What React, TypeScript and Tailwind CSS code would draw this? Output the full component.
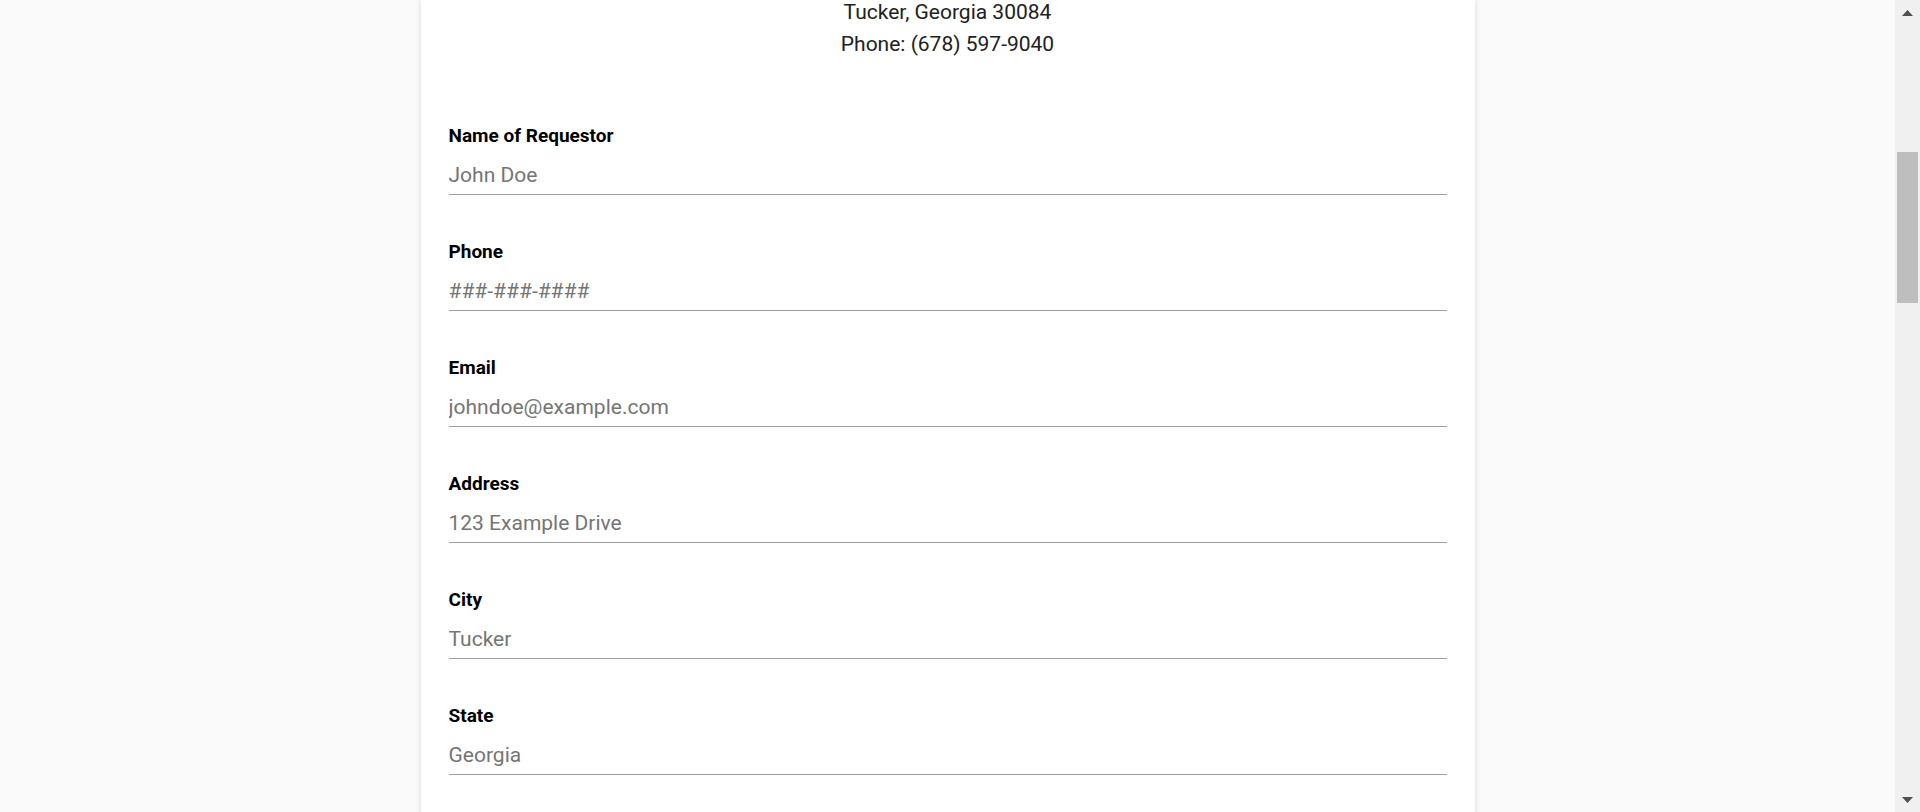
import React from 'react';

const fields = [
  { label: 'Name of Requestor', placeholder: 'John Doe', type: 'text' },
  { label: 'Phone', placeholder: '###-###-####', type: 'tel' },
  { label: 'Email', placeholder: 'johndoe@example.com', type: 'email' },
  { label: 'Address', placeholder: '123 Example Drive', type: 'text' },
  { label: 'City', placeholder: 'Tucker', type: 'text' },
  { label: 'State', placeholder: 'Georgia', type: 'text' },
];

const Scrollbar = () => (
  <div className="flex w-[25px] shrink-0 flex-col bg-[#f0f0f0]">
    <div className="flex h-[26px] items-center justify-center">
      <svg width="11" height="6" viewBox="0 0 11 6">
        <polygon points="5.5,0 11,6 0,6" fill="#505050" />
      </svg>
    </div>
    <div className="mt-[126px] ml-[2px] h-[151px] w-[21px] bg-[#bebebe]" />
    <div className="flex-1" />
    <div className="flex h-[25px] items-center justify-center">
      <svg width="11" height="6" viewBox="0 0 11 6">
        <polygon points="0,0 11,0 5.5,6" fill="#505050" />
      </svg>
    </div>
  </div>
);

export default function App() {
  return (
    <div className="flex h-screen overflow-hidden bg-[#fafafa] font-['Roboto',sans-serif]">
      <main className="flex flex-1 justify-center overflow-hidden">
        <div className="h-fit w-[1054px] bg-white px-[28px] pb-[200px] shadow-[0_0_5px_rgba(0,0,0,0.14)]">
          <div className="-mt-[4px] text-center text-[21px] leading-[32px] text-[#212121]">
            <p>Tucker, Georgia 30084</p>
            <p>Phone: (678) 597-9040</p>
          </div>

          <form className="mt-[64px]">
            {fields.map((f) => (
              <div key={f.label} className="mb-[45px]">
                <label className="block text-[19px] leading-6 font-bold text-black">
                  {f.label}
                </label>
                <input
                  type={f.type}
                  placeholder={f.placeholder}
                  className="mt-[7px] block h-[40px] w-full border-b border-[#9e9e9e] bg-transparent text-[21px] text-[#212121] outline-none placeholder:text-[#757575]"
                />
              </div>
            ))}
          </form>
        </div>
      </main>
      <Scrollbar />
    </div>
  );
}
